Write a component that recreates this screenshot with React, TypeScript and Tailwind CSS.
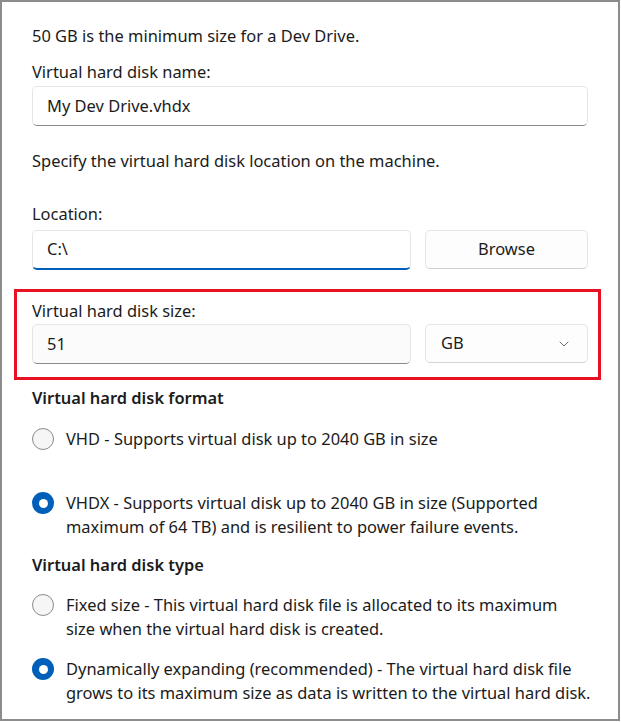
import { ChevronDown } from "lucide-react"

const font = { fontFamily: '"Segoe UI", "Noto Sans", "Open Sans", sans-serif' }

function Radio({ checked }: { checked?: boolean }) {
  if (checked) {
    return (
      <span className="mt-[1px] flex size-[22px] shrink-0 items-center justify-center rounded-full bg-[#005fb8]">
        <span className="size-[9px] rounded-full bg-white" />
      </span>
    )
  }
  return (
    <span className="mt-[1px] size-[22px] shrink-0 rounded-full border border-[#8b8b8b] bg-[#f6f6f6]" />
  )
}

function Option({ checked, children }: { checked?: boolean; children: React.ReactNode }) {
  return (
    <div className="flex items-start gap-[12px]">
      <Radio checked={checked} />
      <p className="whitespace-nowrap leading-[24px]">{children}</p>
    </div>
  )
}

function Field({
  value,
  focused,
  muted,
}: {
  value: string
  focused?: boolean
  muted?: boolean
}) {
  return (
    <div
      className={
        "flex h-[40px] flex-1 items-center rounded-[5px] border border-[#e5e5e5] px-[14px] " +
        (muted ? "bg-[#fbfbfb] " : "bg-white ") +
        (focused
          ? "border-b-2 border-b-[#005fb8]"
          : "border-b-[#8a8a8a]")
      }
    >
      {value}
    </div>
  )
}

export default function App() {
  return (
    <div
      className="h-[721px] w-[620px] border-2 border-[#8c8c8c] bg-white pl-[30px] pr-[20px] pt-[22px] text-[16.45px] text-[#1b1b1b]"
      style={font}
    >
      <p className="leading-[24px]">50 GB is the minimum size for a Dev Drive.</p>
      <p className="mt-[12px] leading-[24px]">Virtual hard disk name:</p>
      <div className="mt-[2px] flex w-[556px]">
        <Field value="My Dev Drive.vhdx" />
      </div>

      <p className="mt-[23px] leading-[24px]">
        Specify the virtual hard disk location on the machine.
      </p>

      <p className="mt-[29px] leading-[24px]">Location:</p>
      <div className="mt-[4px] flex w-[556px] gap-[14px]">
        <Field value="C:\" focused />
        <button className="flex h-[39px] w-[163px] items-center justify-center rounded-[5px] border border-[#e5e5e5] border-b-[#cfcfcf] bg-[#fdfdfd]">
          Browse
        </button>
      </div>

      <div className="-ml-[18px] mt-[19px] w-[587px] border-[3px] border-[#e81123] pb-[13px] pl-[15px] pt-[7px]">
        <p className="leading-[24px]">Virtual hard disk size:</p>
        <div className="mt-[1px] flex w-[556px] gap-[14px]">
          <Field value="51" muted />
          <div className="flex h-[39px] w-[163px] items-center justify-between rounded-[5px] border border-[#e5e5e5] border-b-[#d4d4d4] bg-[#fdfdfd] pl-[15px] pr-[15px]">
            <span>GB</span>
            <ChevronDown className="size-[16px] text-[#5f5f5f]" strokeWidth={1.4} />
          </div>
        </div>
      </div>

      <p className="mt-[6px] font-semibold leading-[24px]">Virtual hard disk format</p>
      <div className="mt-[17px]">
        <Option>VHD - Supports virtual disk up to 2040 GB in size</Option>
      </div>
      <div className="mt-[40px]">
        <Option checked>
          VHDX - Supports virtual disk up to 2040 GB in size (Supported
          <br />
          maximum of 64 TB) and is resilient to power failure events.
        </Option>
      </div>

      <p className="mt-[14px] font-semibold leading-[24px]">Virtual hard disk type</p>
      <div className="mt-[16px]">
        <Option>
          Fixed size - This virtual hard disk file is allocated to its maximum
          <br />
          size when the virtual hard disk is created.
        </Option>
      </div>
      <div className="mt-[16px]">
        <Option checked>
          Dynamically expanding (recommended) - The virtual hard disk file
          <br />
          grows to its maximum size as data is written to the virtual hard disk.
        </Option>
      </div>
    </div>
  )
}
